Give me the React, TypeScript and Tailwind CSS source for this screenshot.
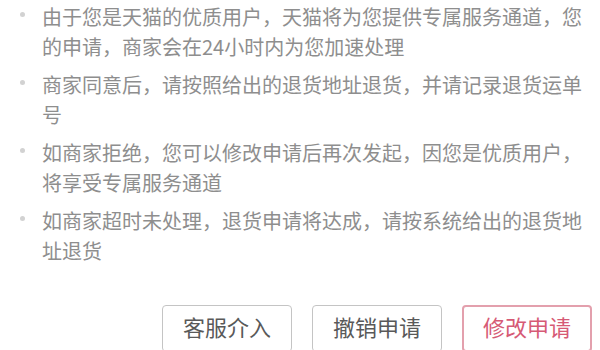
import React from 'react';

const tips: string[] = [
    '由于您是天猫的优质用户，天猫将为您提供专属服务通道，您的申请，商家会在24小时内为您加速处理',
    '商家同意后，请按照给出的退货地址退货，并请记录退货运单号',
    '如商家拒绝，您可以修改申请后再次发起，因您是优质用户，将享受专属服务通道',
    '如商家超时未处理，退货申请将达成，请按系统给出的退货地址退货',
];

const App: React.FC = () => {
    return (
        <div
            className="w-[600px] h-[350px] overflow-hidden bg-white"
            style={{ fontFamily: '"Noto Sans CJK SC", "Noto Sans", sans-serif' }}
        >
            {/* Tips */}
            <ul className="pt-[2px] pr-[10px] flex flex-col gap-[8px]">
                {tips.map((t, i) => (
                    <li key={i} className="flex">
                        <div className="w-[42px] shrink-0 flex justify-center pl-[2px]">
                            <span className="mt-[10px] w-[5px] h-[5px] rounded-full bg-[#d2d2d2]" />
                        </div>
                        <p className="text-[20px] leading-[30px] text-[#8e8e8e]">{t}</p>
                    </li>
                ))}
            </ul>

            {/* Actions */}
            <div className="mt-[39px] pr-[8px] flex justify-end gap-[20px]">
                <button className="w-[130px] h-[47px] pb-[5px] rounded-[4px] border border-[#c4c4c4] text-[22px] text-[#595959] bg-white">
                    客服介入
                </button>
                <button className="w-[130px] h-[47px] pb-[5px] rounded-[4px] border border-[#c4c4c4] text-[22px] text-[#595959] bg-white">
                    撤销申请
                </button>
                <button className="w-[130px] h-[47px] pb-[5px] rounded-[4px] border-2 border-[#e3a0ad] text-[22px] text-[#d65a75] bg-white">
                    修改申请
                </button>
            </div>
        </div>
    );
};

export default App;
